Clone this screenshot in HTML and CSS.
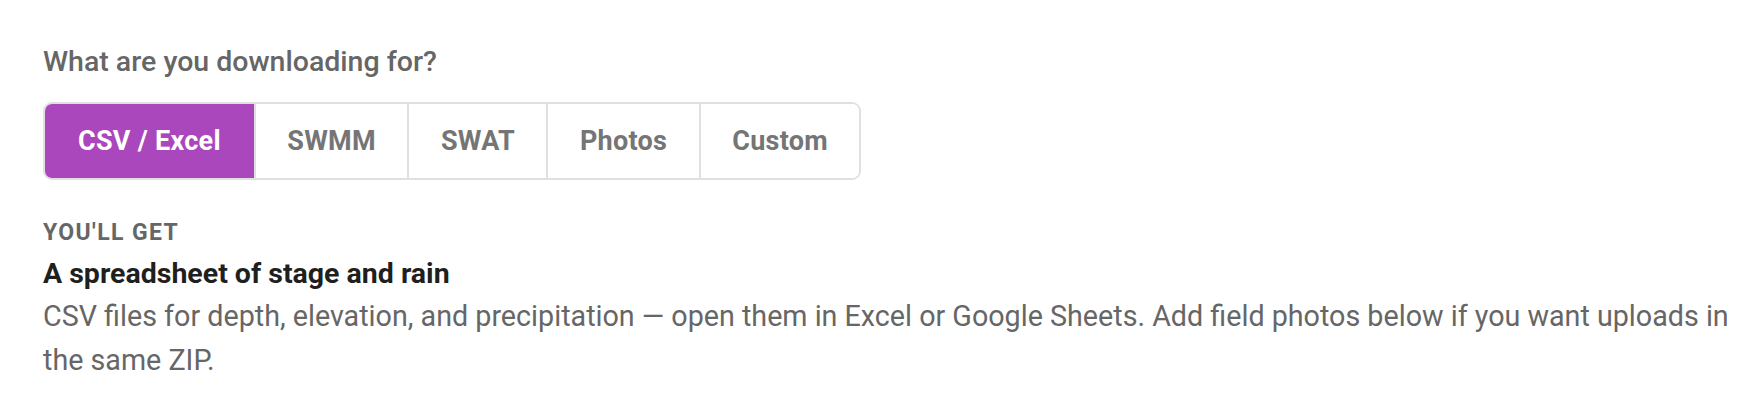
FILE: index.html
```html
<!DOCTYPE html>
<html lang="en">
<head>
<meta charset="utf-8">
<title>Download</title>
<link rel="stylesheet" href="styles.css">
</head>
<body>
<main class="panel">
  <p class="question">What are you downloading for?</p>
  <div class="tabs" role="tablist">
    <button class="tab active" role="tab">CSV / Excel</button>
    <button class="tab" role="tab">SWMM</button>
    <button class="tab" role="tab">SWAT</button>
    <button class="tab" role="tab">Photos</button>
    <button class="tab" role="tab">Custom</button>
  </div>
  <section class="result">
    <div class="eyebrow">YOU'LL GET</div>
    <h2 class="title">A spreadsheet of stage and rain</h2>
    <p class="desc">CSV files for depth, elevation, and precipitation — open them in Excel or Google Sheets. Add field photos below if you want uploads in the same ZIP.</p>
  </section>
</main>
</body>
</html>
```
FILE: styles.css
```css
* { box-sizing: border-box; }
html, body { margin: 0; padding: 0; background: #ffffff; }
body { font-family: Roboto, "Noto Sans", Arial, sans-serif; }
.panel { padding: 44px 24px 0 43px; }
.question {
  margin: 0;
  font-size: 28.5px;
  font-weight: 500;
  color: #666666;
  line-height: 36px;
}
.tabs {
  display: inline-flex;
  margin-top: 22px;
  border: 2px solid #e0e0e0;
  border-radius: 9px;
  overflow: hidden;
}
.tab {
  font-family: inherit;
  font-size: 27px;
  font-weight: 700;
  letter-spacing: 0.01em;
  color: #757575;
  background: #ffffff;
  border: none;
  border-left: 2px solid #e0e0e0;
  padding: 0 31.5px;
  height: 74px;
  cursor: pointer;
}
.tab:first-child { border-left: none; padding: 0 33px; }
.tab.active {
  background: #ab47bc;
  color: #ffffff;
}
.result { margin-top: 38px; }
.eyebrow {
  font-size: 23px;
  font-weight: 700;
  letter-spacing: 0.06em;
  color: #666666;
  line-height: 30px;
}
.title {
  margin: 8px 0 0 0;
  font-size: 28.5px;
  font-weight: 700;
  color: #1f1f1f;
  line-height: 36px;
}
.desc {
  margin: 2px 0 0 0;
  font-size: 28.7px;
  font-weight: 400;
  color: #666666;
  line-height: 44px;
}
```
